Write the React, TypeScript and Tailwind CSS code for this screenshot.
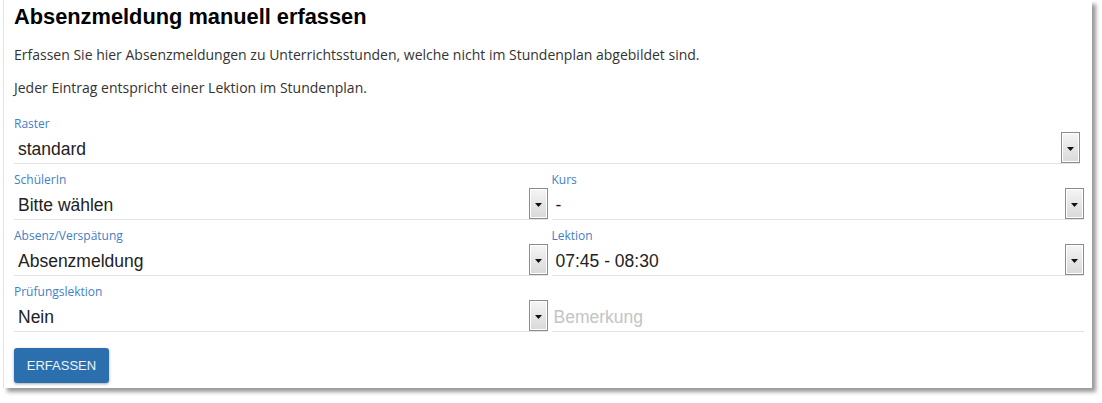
type FieldProps = {
  label: string;
  value?: string;
  placeholder?: string;
  select?: boolean;
  className?: string;
};

function DropButton() {
  return (
    <span className="flex h-[31px] w-[19px] shrink-0 items-center justify-center border border-[#8c8c8c] bg-gradient-to-b from-[#f5f5f5] to-[#d9d9d9] shadow-[inset_0_0_0_1px_#ffffff]">
      <svg width="7" height="4" viewBox="0 0 7 4" className="mt-[2px]">
        <polygon points="0,0 7,0 3.5,4" fill="#111" />
      </svg>
    </span>
  );
}

function Field({ label, value, placeholder, select = true, className = "" }: FieldProps) {
  return (
    <div className={`mb-[8px] ${className}`}>
      <div className="h-[16px] text-[12px] leading-[15px] text-[#3f7fc4] font-['Open_Sans',sans-serif]">
        {label}
      </div>
      <div className="flex h-[32px] items-end border-b border-[#e3e3e3]">
        <div
          className={`flex-1 pb-[4px] font-['Liberation_Sans',Arial,sans-serif] text-[17.5px] leading-[20px] ${
            value ? "pl-[4px] text-[#222]" : "pl-[2px] text-[#c4c4c4]"
          }`}
        >
          {value ?? placeholder}
        </div>
        {select && <DropButton />}
      </div>
    </div>
  );
}

export default function App() {
  return (
    <div className="h-[403px] w-[1102px] bg-white">
      <div className="ml-[3px] h-[388px] w-[1089px] border-l border-[#e4e4e4] bg-white pl-[10px] pr-[7px] pt-[4px] shadow-[4px_4px_4px_rgba(0,0,0,0.4)]">
        <h1 className="h-[26px] font-['Liberation_Sans',Arial,sans-serif] text-[21.8px] font-bold leading-[26px] text-black">
          Absenzmeldung manuell erfassen
        </h1>
        <p className="mt-[15px] font-['Open_Sans',sans-serif] text-[14px] leading-[20px] text-[#333]">
          Erfassen Sie hier Absenzmeldungen zu Unterrichtsstunden, welche nicht im Stundenplan abgebildet sind.
        </p>
        <p className="mt-[13px] font-['Open_Sans',sans-serif] text-[14px] leading-[20px] text-[#333]">
          Jeder Eintrag entspricht einer Lektion im Stundenplan.
        </p>

        <div className="mt-[18px] grid grid-cols-2 gap-x-[4px]">
          <Field label="Raster" value="standard" className="col-span-2 pr-[5px]" />
          <Field label="SchülerIn" value="Bitte wählen" />
          <Field label="Kurs" value="-" className="pr-[1px]" />
          <Field label="Absenz/Verspätung" value="Absenzmeldung" />
          <Field label="Lektion" value="07:45 - 08:30" className="pr-[1px]" />
          <Field label="Prüfungslektion" value="Nein" />
          <Field label="&nbsp;" placeholder="Bemerkung" select={false} className="pr-[1px] [&>div:first-child]:invisible" />
        </div>

        <button
          type="button"
          className="mt-[8px] h-[35px] w-[95px] rounded-[3px] bg-[#2c6fae] font-['Liberation_Sans',Arial,sans-serif] text-[13px] text-[#eef4fa] shadow-[0_1px_3px_rgba(0,0,0,0.35)]"
        >
          ERFASSEN
        </button>
      </div>
    </div>
  );
}
